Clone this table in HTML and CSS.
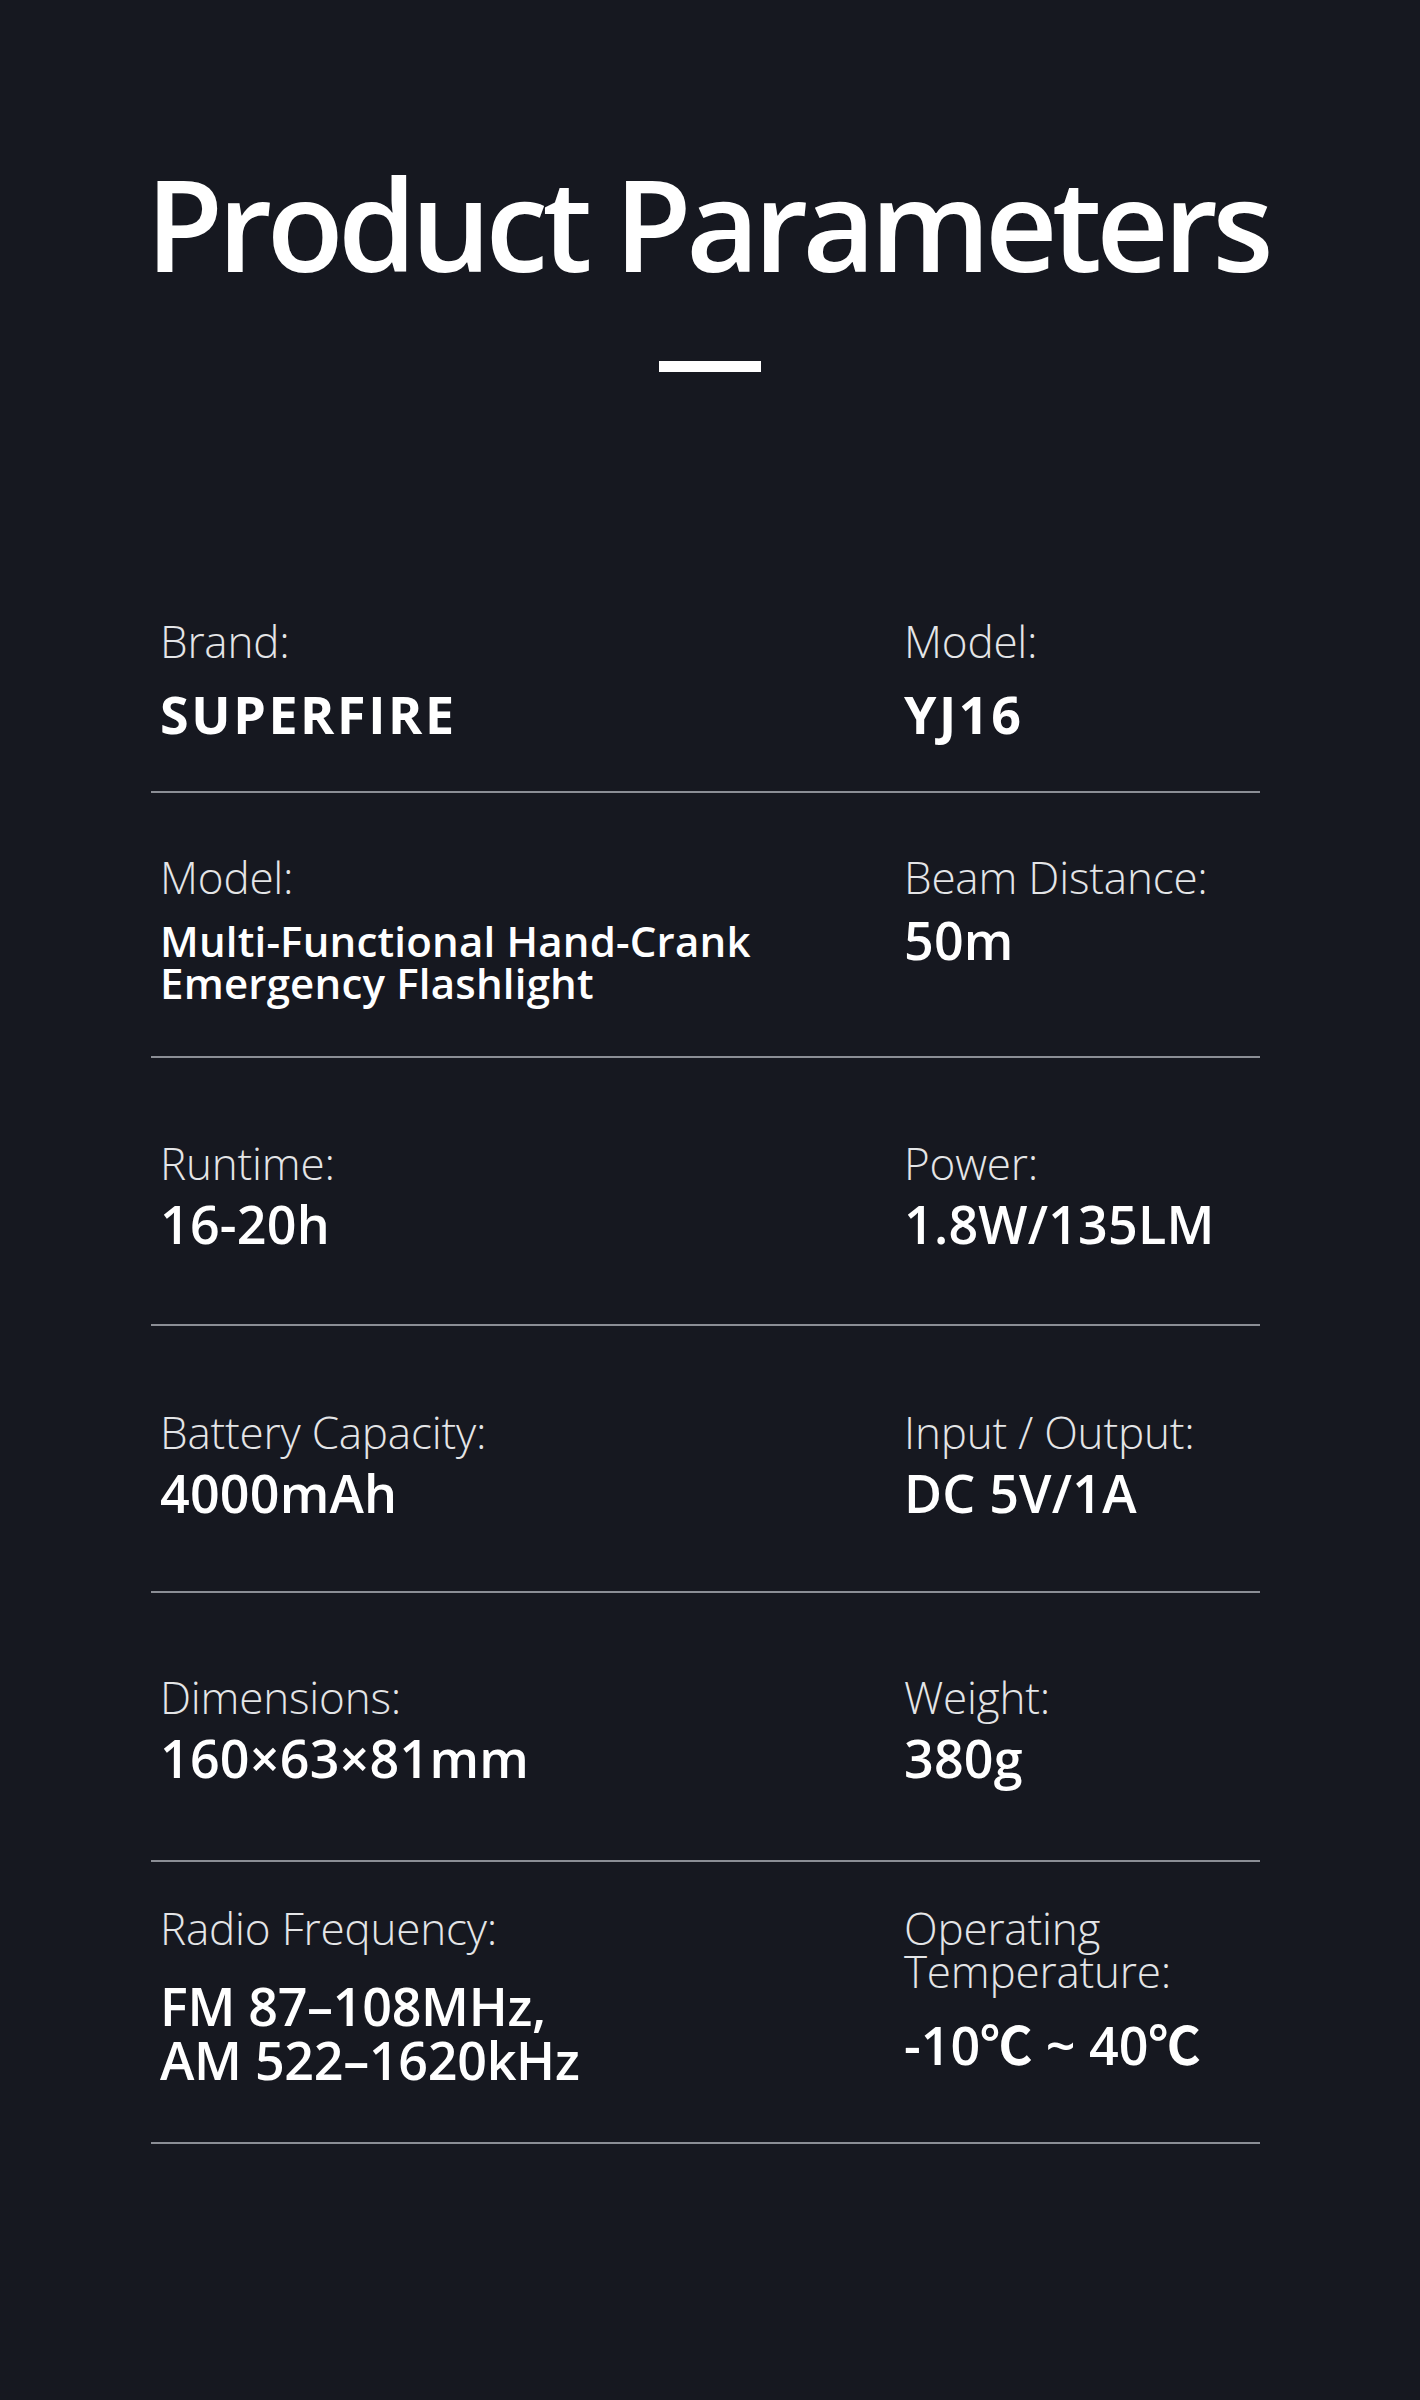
FILE: index.html
```html
<!DOCTYPE html>
<html lang="en">
<head>
<meta charset="utf-8">
<title>Product Parameters</title>
<link rel="stylesheet" href="styles.css">
</head>
<body>
<main class="page">
  <header class="header">
    <h1 class="title">Product Parameters</h1>
    <div class="title-bar"></div>
  </header>

  <section class="specs">
    <div class="row row--1">
      <div class="cell cell--left">
        <div class="label">Brand:</div>
        <div class="value value--strong">SUPERFIRE</div>
      </div>
      <div class="cell cell--right">
        <div class="label">Model:</div>
        <div class="value value--strong">YJ16</div>
      </div>
    </div>

    <div class="row row--2">
      <div class="cell cell--left">
        <div class="label">Model:</div>
        <div class="value value--small">Multi-Functional Hand-Crank<br>Emergency Flashlight</div>
      </div>
      <div class="cell cell--right">
        <div class="label">Beam Distance:</div>
        <div class="value">50m</div>
      </div>
    </div>

    <div class="row row--3">
      <div class="cell cell--left">
        <div class="label">Runtime:</div>
        <div class="value">16-20h</div>
      </div>
      <div class="cell cell--right">
        <div class="label">Power:</div>
        <div class="value">1.8W/135LM</div>
      </div>
    </div>

    <div class="row row--4">
      <div class="cell cell--left">
        <div class="label">Battery Capacity:</div>
        <div class="value">4000mAh</div>
      </div>
      <div class="cell cell--right">
        <div class="label">Input / Output:</div>
        <div class="value">DC 5V/1A</div>
      </div>
    </div>

    <div class="row row--5">
      <div class="cell cell--left">
        <div class="label">Dimensions:</div>
        <div class="value">160×63×81mm</div>
      </div>
      <div class="cell cell--right">
        <div class="label">Weight:</div>
        <div class="value">380g</div>
      </div>
    </div>

    <div class="row row--6">
      <div class="cell cell--left">
        <div class="label">Radio Frequency:</div>
        <div class="value value--multi">FM 87–108MHz,<br>AM 522–1620kHz</div>
      </div>
      <div class="cell cell--right">
        <div class="label">Operating Temperature:</div>
        <div class="value value--temp">-10℃ ~ 40℃</div>
      </div>
    </div>
  </section>
</main>
</body>
</html>
```

FILE: styles.css
```css
html, body {
  margin: 0;
  padding: 0;
  background: #161820;
}

.page {
  width: 1420px;
  min-height: 2400px;
  background: #161820;
  font-family: "Open Sans", "Noto Sans", "Noto Sans CJK SC", sans-serif;
  color: #ffffff;
  overflow: hidden;
}

.header {
  display: flex;
  flex-direction: column;
  align-items: center;
  padding-top: 160px;
}

.title {
  margin: 0 6px 0 0;
  font-size: 126px;
  line-height: 126px;
  font-weight: 600;
  letter-spacing: -5.5px;
  color: #ffffff;
}

.title-bar {
  width: 102px;
  height: 11px;
  margin-top: 75px;
  background: #ffffff;
}

.specs {
  width: 1109px;
  margin: 243px 0 0 151px;
}

.row {
  display: grid;
  grid-template-columns: 753px 1fr;
  border-bottom: 2px solid #8b8e95;
}

.cell {
  display: flex;
  flex-direction: column;
}

.cell--left {
  padding-left: 9px;
}

.label {
  font-size: 44px;
  line-height: 52.8px;
  font-weight: 300;
  letter-spacing: -0.2px;
  color: #e4e5e7;
}

.value {
  font-size: 52px;
  line-height: 62.4px;
  font-weight: 600;
  letter-spacing: 0.2px;
  color: #ffffff;
  margin-top: 3px;
}

.value--strong {
  font-weight: 700;
  letter-spacing: 2.6px;
  margin-top: 15px;
}

.value--small {
  font-size: 42px;
  line-height: 42px;
  letter-spacing: 0.2px;
  margin-top: 16px;
}

.row--1 { padding: 0 0 46px; }
.row--2 { padding: 58px 0 52px; }
.row--2 .cell--right .value { margin-top: 5px; }
.row--3 { padding: 79px 0 69px; }
.row--4 { padding: 80px 0 67px; }
.row--5 { padding: 78px 0 70px; }
.row--6 { padding: 45px 0 55px; }

.row--6 .label {
  line-height: 43px;
}

.value--multi {
  line-height: 54px;
  letter-spacing: -0.3px;
  margin-top: 29px;
}

.value--temp {
  margin-top: 21px;
  letter-spacing: 0;
  font-family: "Open Sans", "Noto Sans CJK SC", sans-serif;
}
```
